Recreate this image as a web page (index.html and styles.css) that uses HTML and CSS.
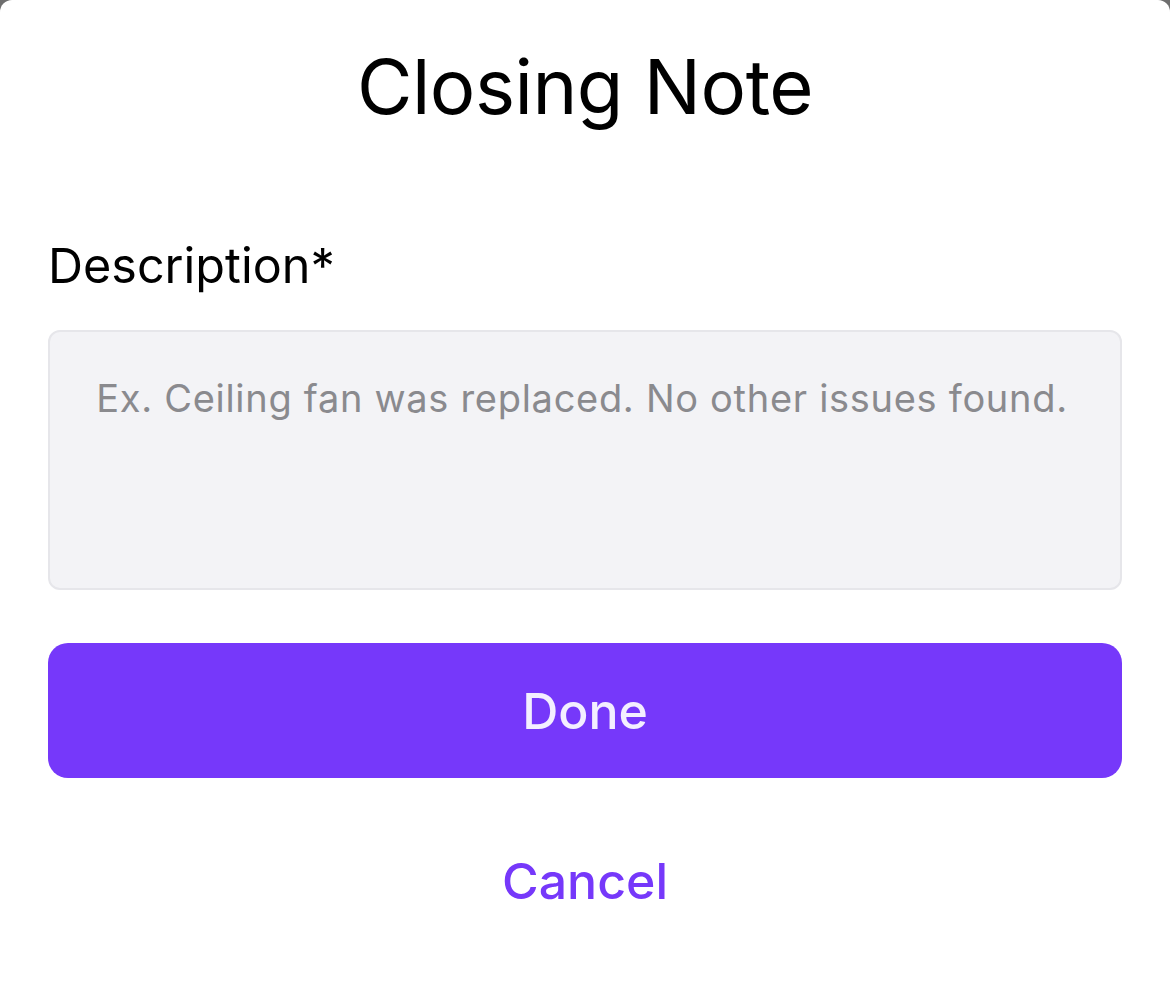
FILE: index.html
```html
<!DOCTYPE html>
<html lang="en">
<head>
<meta charset="utf-8">
<title>Closing Note</title>
<link rel="stylesheet" href="styles.css">
</head>
<body>
<div class="sheet">
  <h1 class="title">Closing Note</h1>
  <label class="label" for="desc">Description*</label>
  <div class="field" id="desc">
    <span class="placeholder">Ex. Ceiling fan was replaced. No other issues found.</span>
  </div>
  <button class="done" type="button">Done</button>
  <button class="cancel" type="button">Cancel</button>
</div>
</body>
</html>
```
FILE: styles.css
```css
html, body {
  margin: 0;
  padding: 0;
  background: #6e6e6e;
  height: 100%;
}
body {
  font-family: Inter, "Liberation Sans", sans-serif;
  overflow: hidden;
}
.sheet {
  background: #ffffff;
  min-height: 100%;
  border-radius: 12px 12px 0 0;
  padding: 40px 48px 0;
  box-sizing: border-box;
  display: flex;
  flex-direction: column;
}
.title {
  margin: 0;
  font-weight: 400;
  font-size: 76px;
  line-height: 92px;
  text-align: center;
  color: #000;
  letter-spacing: -0.5px;
}
.label {
  margin-top: 104px;
  font-size: 48.5px;
  line-height: 60px;
  color: #000;
}
.field {
  margin-top: 34px;
  height: 260px;
  box-sizing: border-box;
  background: #f3f3f6;
  border: 2px solid #e6e6ea;
  border-radius: 12px;
  padding: 42px 16px 0 10px;
  text-align: center;
  white-space: nowrap;
}
.placeholder {
  font-size: 38px;
  line-height: 48px;
  color: #8a8a8e;
  letter-spacing: 0.7px;
}
.done {
  margin-top: 53px;
  height: 135px;
  border: none;
  border-radius: 20px;
  background: #7638fa;
  color: #f3efff;
  font-family: inherit;
  font-size: 50px;
  font-weight: 500;
}
.cancel {
  margin-top: 73px;
  background: none;
  border: none;
  color: #7638fa;
  font-family: inherit;
  font-size: 50px;
  font-weight: 500;
  padding: 0;
  line-height: 60px;
}
```
